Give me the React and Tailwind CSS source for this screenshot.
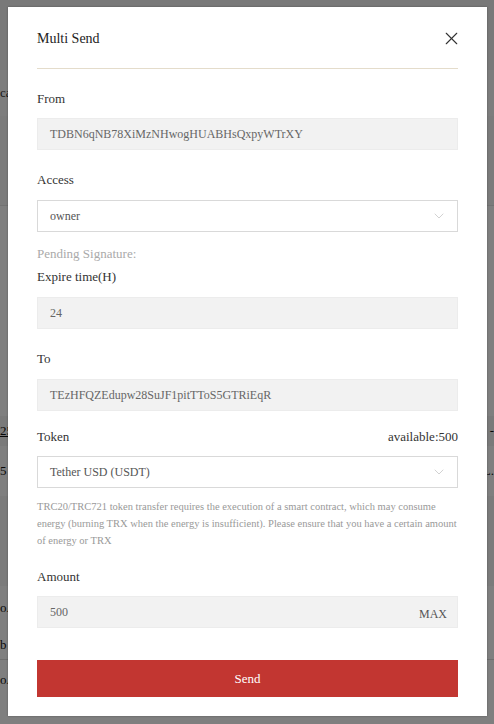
import { X, ChevronDown } from 'lucide-react'

const serif = { fontFamily: '"Liberation Serif", "Times New Roman", serif' }

function Label({ children, right }) {
  return (
    <div className="flex items-center justify-between text-[13px] leading-[18px] text-[#333]">
      <span>{children}</span>
      {right && <span>{right}</span>}
    </div>
  )
}

function ReadOnlyField({ value, suffix }) {
  return (
    <div className="flex h-8 items-center border border-[#ececec] bg-[#f2f2f2] pl-3 pr-2.5 text-[12px] text-[#666]">
      <span className="flex-1">{value}</span>
      {suffix && <span className="pt-[3px] text-[#555]">{suffix}</span>}
    </div>
  )
}

function SelectField({ value }) {
  return (
    <div className="flex h-8 items-center border border-[#d9d9d9] bg-white pl-3 pr-2.5 text-[12px] text-[#555]">
      <span className="flex-1">{value}</span>
      <ChevronDown size={16} strokeWidth={1} color="#bbb" />
    </div>
  )
}

export default function App() {
  return (
    <div className="relative h-[724px] w-[494px] overflow-hidden bg-white" style={serif}>
      {/* page behind the dialog */}
      <div className="flex h-full flex-col text-[13px] text-[#111]">
        <div className="h-[70px] bg-[#f2f2f2]" />
        <div className="flex h-[46px] items-center bg-[#fbfbfb] text-[#333]">ca</div>
        <div className="h-[90px] border-b border-[#e5e5e5] bg-[#f7f7f7]" />
        <div className="h-[210px]" />
        <div className="flex h-[30px] items-center justify-between bg-[#f4f4f4]">
          <span className="underline">25</span>
          <span>-</span>
        </div>
        <div className="flex h-[50px] items-center justify-between">
          <span>5 T</span>
          <span>L.</span>
        </div>
        <div className="h-[90px] bg-[#f6f6f6]" />
        <div className="flex h-[44px] items-center">oA</div>
        <div className="flex h-[30px] items-center border-b border-[#ddd]">b</div>
        <div className="flex h-[40px] items-center">oA</div>
      </div>

      {/* dimmed overlay + dialog */}
      <div className="absolute inset-0 bg-black/50">
        <div className="absolute left-[8px] top-[7px] w-[479px] bg-white px-[29px] pb-[19px] shadow-[0_0_2px_rgba(0,0,0,0.3)]">
          <div className="flex h-[62px] items-center justify-between border-b border-[#e4dccb] pt-[1px]">
            <span className="text-[14px] text-[#222]">Multi Send</span>
            <X size={21} strokeWidth={1.3} color="#333" className="-mr-[4px]" />
          </div>

          <div className="flex flex-col pt-[21px]">
            <Label>From</Label>
            <div className="mt-[10px]">
              <ReadOnlyField value="TDBN6qNB78XiMzNHwogHUABHsQxpyWTrXY" />
            </div>

            <div className="mt-[21px]">
              <Label>Access</Label>
            </div>
            <div className="mt-[11px]">
              <SelectField value="owner" />
            </div>

            <div className="mt-[13px] text-[13px] leading-[18px] text-[#aaa]">Pending Signature:</div>
            <div className="mt-[5px]">
              <Label>Expire time(H)</Label>
            </div>
            <div className="mt-[11px]">
              <ReadOnlyField value="24" />
            </div>

            <div className="mt-[21px]">
              <Label>To</Label>
            </div>
            <div className="mt-[11px]">
              <ReadOnlyField value="TEzHFQZEdupw28SuJF1pitTToS5GTRiEqR" />
            </div>

            <div className="mt-[17px]">
              <Label right="available:500">Token</Label>
            </div>
            <div className="mt-[10px]">
              <SelectField value="Tether USD (USDT)" />
            </div>

            <p className="mt-[10px] text-[10.5px] leading-[17px] text-[#999]">
              TRC20/TRC721 token transfer requires the execution of a smart contract, which may consume energy (burning TRX when the energy is insufficient). Please ensure that you have a certain amount of energy or TRX
            </p>

            <div className="mt-[19px]">
              <Label>Amount</Label>
            </div>
            <div className="mt-[10px]">
              <ReadOnlyField value="500" suffix="MAX" />
            </div>

            <button className="mt-[32px] h-[37px] w-full bg-[#c23631] text-[13px] text-white">Send</button>
          </div>
        </div>
      </div>
    </div>
  )
}
